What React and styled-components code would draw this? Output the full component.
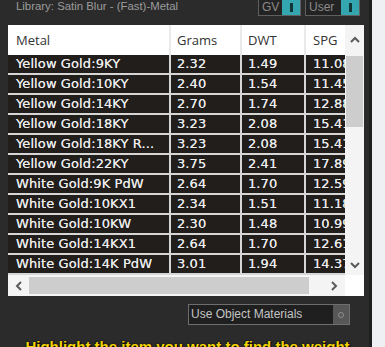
import React from 'react'
import styled, { createGlobalStyle } from 'styled-components'

const GlobalStyle = createGlobalStyle`
  html, body {
    margin: 0;
    padding: 0;
    background: #2b2b2b;
  }
`

const rows = [
  ['Yellow Gold:9KY', '2.32', '1.49', '11.08'],
  ['Yellow Gold:10KY', '2.40', '1.54', '11.45'],
  ['Yellow Gold:14KY', '2.70', '1.74', '12.88'],
  ['Yellow Gold:18KY', '3.23', '2.08', '15.41'],
  ['Yellow Gold:18KY R...', '3.23', '2.08', '15.41'],
  ['Yellow Gold:22KY', '3.75', '2.41', '17.89'],
  ['White Gold:9K PdW', '2.64', '1.70', '12.59'],
  ['White Gold:10KX1', '2.34', '1.51', '11.18'],
  ['White Gold:10KW', '2.30', '1.48', '10.99'],
  ['White Gold:14KX1', '2.64', '1.70', '12.61'],
  ['White Gold:14K PdW', '3.01', '1.94', '14.37'],
]

const COLS = '161px 69px 62px 70px'

const Page = styled.div`
  display: flex;
  width: 385px;
  height: 347px;
  overflow: hidden;
`

const Panel = styled.div`
  width: 372px;
  flex-shrink: 0;
  background: #2b2b2b;
  border-right: 3px solid #1f1f1f;
  padding: 0 5px 0 8px;
  box-sizing: border-box;
  display: flex;
  flex-direction: column;
  overflow: hidden;
  & > * {
    flex-shrink: 0;
  }
`

const Strip = styled.div`
  flex: 1;
  background: #eef0f3;
`

const TopBar = styled.div`
  height: 25px;
  display: flex;
  justify-content: space-between;
  align-items: flex-start;
  padding: 0 4px 0 8px;
`

const LibraryLabel = styled.div`
  font-family: 'Liberation Sans', Arial, sans-serif;
  font-size: 11.4px;
  color: #9c9c9c;
  line-height: 13px;
`

const Toggles = styled.div`
  display: flex;
  gap: 4px;
`

const ToggleBox = styled.div`
  display: flex;
  align-items: stretch;
  height: 16px;
  border: 1px solid #5f5f5f;
  border-top: none;
  background: #232323;
  box-sizing: border-box;
  width: ${p => p.$w}px;
`

const ToggleText = styled.span`
  flex: 1;
  font-family: 'Liberation Sans', Arial, sans-serif;
  font-size: 12px;
  color: #8c8c8c;
  padding-left: 3px;
  line-height: 15px;
`

const ToggleKnob = styled.span`
  width: 18px;
  background: #33a6b0;
  display: flex;
  align-items: center;
  justify-content: center;
  &::after {
    content: '';
    width: 3px;
    height: 9px;
    background: #123538;
  }
`

const TableFrame = styled.div`
  height: 271px;
  background: #ffffff;
  display: grid;
  grid-template-columns: 1fr 19px;
  grid-template-rows: 250px 21px;
`

const Viewport = styled.div`
  overflow: hidden;
`

const HeaderRow = styled.div`
  display: grid;
  grid-template-columns: ${COLS};
  column-gap: 2px;
  height: 30px;
  background: #eaeaea;
  width: max-content;
`

const HeaderCell = styled.div`
  background: #ffffff;
  font-family: 'Open Sans', sans-serif;
  font-size: 13px;
  color: #333333;
  display: flex;
  align-items: center;
  padding-left: ${p => p.$pad}px;
`

const Body = styled.div`
  display: grid;
  grid-template-columns: ${COLS};
  grid-auto-rows: 18px;
  gap: 2px;
  background: #d6d6d6;
  width: max-content;
  padding-bottom: 2px;
`

const Cell = styled.div`
  background: #211e1c;
  font-family: 'DejaVu Sans', Verdana, sans-serif;
  font-size: 13px;
  letter-spacing: 0.1px;
  color: #ececec;
  text-shadow: 0 0 0.3px #dddddd;
  line-height: 18px;
  padding-left: ${p => p.$pad}px;
  white-space: nowrap;
  overflow: hidden;
`

const VScroll = styled.div`
  background: #f4f4f4;
  display: flex;
  flex-direction: column;
`

const VButton = styled.div`
  height: ${p => p.$h}px;
  display: flex;
  align-items: center;
  justify-content: center;
`

const VThumb = styled.div`
  height: 71px;
  margin: 1px 1px 0 1px;
  background: #cdcdcd;
`

const Track = styled.div`
  flex: 1;
`

const HScroll = styled.div`
  background: #f4f4f4;
  display: flex;
  align-items: stretch;
`

const HButton = styled.div`
  width: ${p => p.$w}px;
  display: flex;
  align-items: center;
  justify-content: center;
`

const HTrack = styled.div`
  flex: 1;
  display: flex;
  padding: 2px 0;
`

const HThumb = styled.div`
  width: 280px;
  background: #cdcdcd;
`

const Corner = styled.div`
  background: #ffffff;
`

const OptionsRow = styled.div`
  display: flex;
  justify-content: flex-end;
  padding: 8px 14px 0 0;
`

const OptionBox = styled.div`
  width: 162px;
  height: 21px;
  border: 1px solid #6e6e6e;
  box-sizing: border-box;
  background: #1f1f1f;
  display: flex;
  align-items: stretch;
`

const OptionText = styled.span`
  flex: 1;
  font-family: 'Liberation Sans', Arial, sans-serif;
  font-size: 12px;
  color: #c4c4c4;
  line-height: 19px;
  padding-left: 2px;
`

const OptionButton = styled.span`
  width: 16px;
  background: #575757;
  display: flex;
  align-items: center;
  justify-content: center;
  &::after {
    content: '';
    width: 4px;
    height: 4px;
    border: 1.5px solid #8f8f8f;
    border-radius: 50%;
  }
`

const Hint = styled.div`
  margin-top: 13px;
  padding-left: 3px;
  text-align: center;
  font-family: 'Liberation Sans', Arial, sans-serif;
  font-weight: bold;
  font-size: 15px;
  line-height: 18px;
  color: #f4d400;
  text-shadow: 0 0 2px #000, 1px 1px 0 #000;
  white-space: nowrap;
`

const Chevron = ({ dir }) => {
  const pts = {
    up: '1,6 5,2 9,6',
    down: '1,2 5,6 9,2',
    left: '6,1 2,5 6,9',
    right: '2,1 6,5 2,9',
  }[dir]
  const vertical = dir === 'up' || dir === 'down'
  return (
    <svg width={vertical ? 10 : 8} height={vertical ? 8 : 10} viewBox={vertical ? '0 0 10 8' : '0 0 8 10'}>
      <polyline points={pts} fill="none" stroke="#5a5a5a" strokeWidth="2" />
    </svg>
  )
}

const App = () => {
  return (
    <Page>
      <GlobalStyle />
      <Panel>
        <TopBar>
          <LibraryLabel>Library: Satin Blur - (Fast)-Metal</LibraryLabel>
          <Toggles>
            <ToggleBox $w={43}>
              <ToggleText>GV</ToggleText>
              <ToggleKnob />
            </ToggleBox>
            <ToggleBox $w={55}>
              <ToggleText>User</ToggleText>
              <ToggleKnob />
            </ToggleBox>
          </Toggles>
        </TopBar>
        <TableFrame>
          <Viewport>
            <HeaderRow>
              <HeaderCell $pad={8}>Metal</HeaderCell>
              <HeaderCell $pad={6}>Grams</HeaderCell>
              <HeaderCell $pad={6}>DWT</HeaderCell>
              <HeaderCell $pad={7}>SPG</HeaderCell>
            </HeaderRow>
            <Body>
              {rows.map(r =>
                r.map((v, i) => (
                  <Cell key={r[0] + i} $pad={i === 0 ? 8 : i === 3 ? 7 : 6}>
                    {v}
                  </Cell>
                ))
              )}
            </Body>
          </Viewport>
          <VScroll>
            <VButton $h={30}>
              <Chevron dir="up" />
            </VButton>
            <VThumb />
            <Track />
            <VButton $h={20}>
              <Chevron dir="down" />
            </VButton>
          </VScroll>
          <HScroll>
            <HButton $w={21}>
              <Chevron dir="left" />
            </HButton>
            <HTrack>
              <HThumb />
            </HTrack>
            <HButton $w={23}>
              <Chevron dir="right" />
            </HButton>
          </HScroll>
          <Corner />
        </TableFrame>
        <OptionsRow>
          <OptionBox>
            <OptionText>Use Object Materials</OptionText>
            <OptionButton />
          </OptionBox>
        </OptionsRow>
        <Hint>Highlight the item you want to find the weight</Hint>
      </Panel>
      <Strip />
    </Page>
  )
}

export default App
